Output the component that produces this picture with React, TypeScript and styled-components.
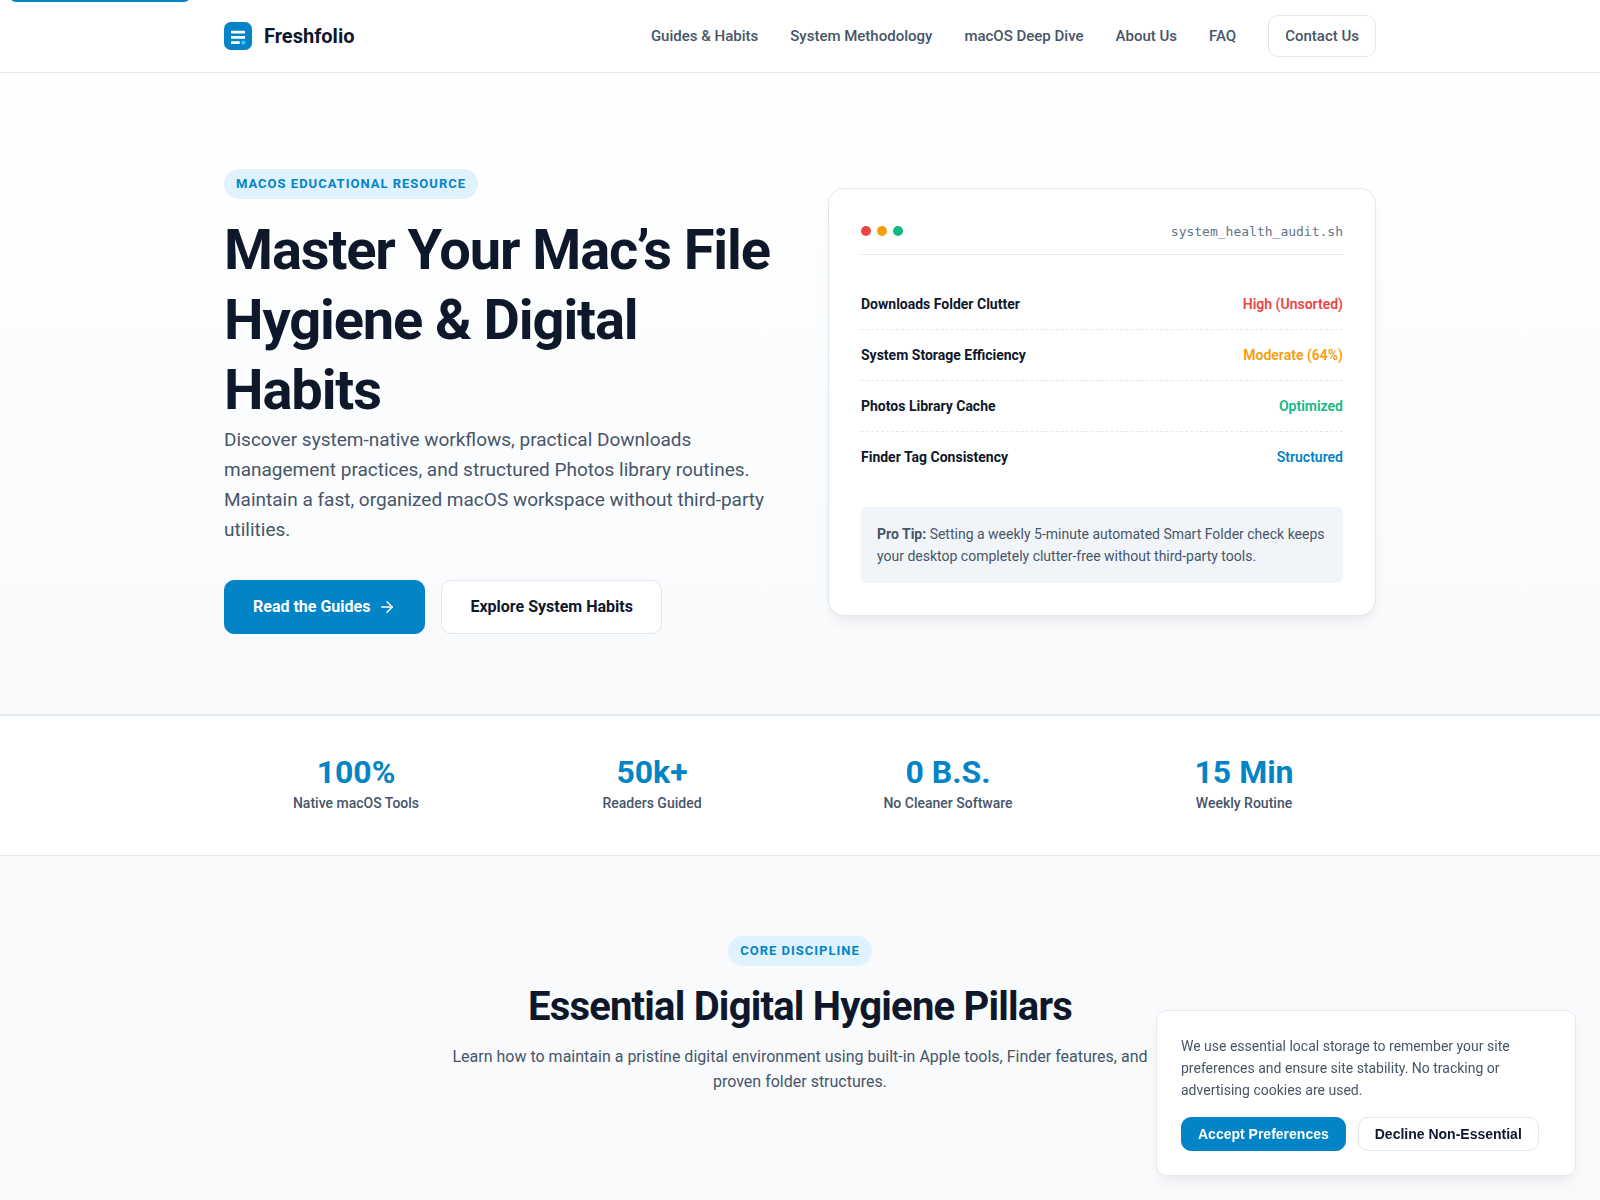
import React, { useState } from 'react';
import styled, { createGlobalStyle, css } from 'styled-components';
import { ArrowRight } from 'lucide-react';

const c = {
  blue: '#0284c7', sky: '#e0f2fe', ink: '#0f172a', slate: '#475569', muted: '#64748b',
  line: '#e2e8f0', soft: '#f1f5f9', page: '#f8fafc',
};

const GlobalStyle = createGlobalStyle`
  *, *::before, *::after { box-sizing: border-box; }
  body { margin: 0; background: ${c.page}; color: ${c.ink}; font: 400 16px/26px Roboto, sans-serif; }
  h1, h2, p, dl, dd, ul { margin: 0; padding: 0; }
  a { color: inherit; text-decoration: none; }
`;

const Page = styled.div`
  min-height: 100vh;
  overflow: hidden;
`;

const SkipLink = styled.a`
  position: absolute;
  top: -40px;
  left: 10px;
  z-index: 20;
  padding: 8px 16px;
  border-radius: 0 0 6px 6px;
  background: ${c.blue};
  color: #fff;
  font-weight: 600;
  &:focus { top: 0; }
`;

const Container = styled.div`
  width: 100%;
  max-width: 1200px;
  margin: 0 auto;
  padding: 0 24px;
`;

const Header = styled.header`
  background: #fff;
  border-bottom: 1px solid ${c.line};
`;

const HeaderRow = styled(Container)`
  display: flex;
  align-items: center;
  justify-content: space-between;
  min-height: 72px;
`;

const Brand = styled.a`
  display: flex;
  align-items: center;
  gap: 12px;
  font-size: 20px;
  font-weight: 700;
`;

const Nav = styled.nav`
  display: flex;
  align-items: center;
  gap: 32px;
  color: ${c.slate};
  font-size: 15px;
  line-height: 24px;
  font-weight: 500;
`;

const ContactLink = styled.a`
  padding: 8px 16px;
  border: 1px solid ${c.line};
  border-radius: 10px;
`;

const Hero = styled.section`
  padding: 96px 0 80px;
  border-bottom: 1px solid ${c.line};
  background: linear-gradient(180deg, #fff 0%, ${c.page} 100%);
`;

const HeroGrid = styled(Container)`
  display: grid;
  grid-template-columns: 1fr 1fr;
  gap: 56px;
  align-items: center;
`;

const Badge = styled.span`
  display: inline-block;
  padding: 4px 12px;
  border-radius: 20px;
  background: ${c.sky};
  color: ${c.blue};
  font-size: 13px;
  line-height: 22px;
  font-weight: 700;
  letter-spacing: 1px;
  text-transform: uppercase;
`;

const HeroTitle = styled.h1`
  margin-top: 16px;
  font-size: 56px;
  line-height: 70px;
  font-weight: 700;
  letter-spacing: -0.02em;
`;

const HeroText = styled.p`
  margin-bottom: 35px;
  color: ${c.slate};
  font-size: 19px;
  line-height: 30px;
`;

const Actions = styled.div`
  display: flex;
  flex-wrap: wrap;
  gap: 16px;
`;

const filled = css`
  border-color: ${c.blue};
  background: ${c.blue};
  color: #fff;
`;

const ActionLink = styled.a<{ $primary?: boolean }>`
  display: inline-flex;
  align-items: center;
  gap: 8px;
  padding: 13px 28px;
  border: 1px solid ${c.line};
  border-radius: 10px;
  background: #fff;
  font-weight: 700;
  ${(p) => p.$primary && filled}
`;

const AuditCard = styled.div`
  padding: 32px;
  border: 1px solid ${c.line};
  border-radius: 16px;
  background: #fff;
  box-shadow: 0 10px 15px -3px rgba(15, 23, 42, 0.05), 0 4px 6px -2px rgba(15, 23, 42, 0.03);
`;

const CardHead = styled.div`
  display: flex;
  align-items: center;
  justify-content: space-between;
  margin-bottom: 24px;
  padding-bottom: 12px;
  border-bottom: 1px solid ${c.line};
`;

const Dots = styled.div`
  display: flex;
  gap: 6px;
`;

const Dot = styled.span<{ $color: string }>`
  width: 10px;
  height: 10px;
  border-radius: 50%;
  background: ${(p) => p.$color};
`;

const FileName = styled.span`
  color: ${c.muted};
  font: 13px/21px "DejaVu Sans Mono", monospace;
`;

const AuditRow = styled.div`
  display: flex;
  align-items: center;
  justify-content: space-between;
  padding: 14px 0;
  border-bottom: 1px dashed ${c.line};
  font-size: 14px;
  line-height: 22px;
  &:last-child { border-bottom-color: transparent; }
`;

const AuditName = styled.dt`
  font-weight: 700;
`;

const AuditValue = styled.dd<{ $color: string }>`
  color: ${(p) => p.$color};
  font-weight: 600;
`;

const Tip = styled.p`
  margin-top: 24px;
  padding: 16px;
  border-radius: 6px;
  background: ${c.soft};
  color: ${c.slate};
  font-size: 14px;
  line-height: 22px;
`;

const Stats = styled.section`
  padding: 40px 0;
  border: solid ${c.line};
  border-width: 1px 0;
  background: #fff;
`;

const StatGrid = styled(Container)`
  display: grid;
  grid-template-columns: repeat(4, 1fr);
  gap: 32px;
  text-align: center;
`;

const StatNumber = styled.div`
  color: ${c.blue};
  font-size: 32px;
  line-height: 32px;
  font-weight: 700;
`;

const StatLabel = styled.div`
  margin-top: 4px;
  color: ${c.slate};
  font-size: 14px;
  line-height: 23px;
  font-weight: 500;
`;

const Pillars = styled.section`
  padding: 80px 0;
`;

const PillarsHead = styled.div`
  max-width: 700px;
  margin: 0 auto;
  text-align: center;
`;

const SectionTitle = styled.h2`
  margin: 16px 0 12px;
  font-size: 40px;
  line-height: 50px;
  font-weight: 700;
  letter-spacing: -0.02em;
`;

const SectionText = styled.p`
  color: ${c.slate};
  line-height: 25px;
`;

const Notice = styled.aside`
  position: fixed;
  right: 24px;
  bottom: 24px;
  z-index: 10;
  width: 420px;
  max-width: calc(100% - 48px);
  padding: 24px;
  border: 1px solid ${c.line};
  border-radius: 10px;
  background: #fff;
  box-shadow: 0 10px 15px -3px rgba(15, 23, 42, 0.05), 0 4px 6px -2px rgba(15, 23, 42, 0.03);
`;

const NoticeText = styled.p`
  margin-bottom: 16px;
  color: ${c.slate};
  font-size: 14px;
  line-height: 22px;
`;

const NoticeActions = styled.div`
  display: flex;
  flex-wrap: wrap;
  gap: 12px;
`;

const NoticeButton = styled.button<{ $primary?: boolean }>`
  padding: 8px 16px;
  border: 1px solid ${c.line};
  border-radius: 10px;
  background: #fff;
  color: ${c.ink};
  font: 600 14px/16px "Liberation Sans", Arial, sans-serif;
  cursor: pointer;
  ${(p) => p.$primary && filled}
`;

const Logo = () => (
  <svg width="28" height="28" viewBox="0 0 32 32" aria-hidden="true">
    <rect width="32" height="32" rx="8" fill={c.blue} />
    <path d="M8 10h16v3H8zM8 16h16v3H8zM8 22h10v3H8z" fill="#fff" />
    <circle cx="22" cy="23.5" r="2.5" fill="#38bdf8" />
  </svg>
);

const links = ['Guides & Habits', 'System Methodology', 'macOS Deep Dive', 'About Us', 'FAQ'];
const audit = [
  ['Downloads Folder Clutter', 'High (Unsorted)', '#ef4444'],
  ['System Storage Efficiency', 'Moderate (64%)', '#f59e0b'],
  ['Photos Library Cache', 'Optimized', '#10b981'],
  ['Finder Tag Consistency', 'Structured', c.blue],
];
const stats = [
  ['100%', 'Native macOS Tools'],
  ['50k+', 'Readers Guided'],
  ['0 B.S.', 'No Cleaner Software'],
  ['15 Min', 'Weekly Routine'],
];

export default function App() {
  const [noticeOpen, setNoticeOpen] = useState(true);
  const closeNotice = () => setNoticeOpen(false);
  return (
    <Page>
      <GlobalStyle />
      <SkipLink href="#main">Skip to main content</SkipLink>
      <Header>
        <HeaderRow>
          <Brand href="#"><Logo />Freshfolio</Brand>
          <Nav>
            {links.map((label) => <a key={label} href="#main">{label}</a>)}
            <ContactLink href="#contact">Contact Us</ContactLink>
          </Nav>
        </HeaderRow>
      </Header>
      <main id="main">
        <Hero>
          <HeroGrid>
            <div>
              <Badge>macOS Educational Resource</Badge>
              <HeroTitle>Master Your Mac’s File Hygiene &amp; Digital Habits</HeroTitle>
              <HeroText>
                Discover system-native workflows, practical Downloads management practices, and structured
                Photos library routines. Maintain a fast, organized macOS workspace without third-party utilities.
              </HeroText>
              <Actions>
                <ActionLink $primary href="#pillars">Read the Guides <ArrowRight size={18} aria-hidden="true" /></ActionLink>
                <ActionLink href="#pillars">Explore System Habits</ActionLink>
              </Actions>
            </div>
            <AuditCard>
              <CardHead>
                <Dots><Dot $color="#ef4444" /><Dot $color="#f59e0b" /><Dot $color="#10b981" /></Dots>
                <FileName>system_health_audit.sh</FileName>
              </CardHead>
              <dl>
                {audit.map(([name, value, color]) => (
                  <AuditRow key={name}>
                    <AuditName>{name}</AuditName>
                    <AuditValue $color={color}>{value}</AuditValue>
                  </AuditRow>
                ))}
              </dl>
              <Tip>
                <strong>Pro Tip:</strong> Setting a weekly 5-minute automated Smart Folder check keeps your desktop
                completely clutter-free without third-party tools.
              </Tip>
            </AuditCard>
          </HeroGrid>
        </Hero>
        <Stats>
          <StatGrid>
            {stats.map(([value, label]) => (
              <div key={label}>
                <StatNumber>{value}</StatNumber>
                <StatLabel>{label}</StatLabel>
              </div>
            ))}
          </StatGrid>
        </Stats>
        <Pillars id="pillars">
          <Container>
            <PillarsHead>
              <Badge>Core Discipline</Badge>
              <SectionTitle>Essential Digital Hygiene Pillars</SectionTitle>
              <SectionText>
                Learn how to maintain a pristine digital environment using built-in Apple tools, Finder features,
                and proven folder structures.
              </SectionText>
            </PillarsHead>
          </Container>
        </Pillars>
      </main>
      {noticeOpen && (
        <Notice aria-label="Storage preferences">
          <NoticeText>
            We use essential local storage to remember your site preferences and ensure site stability. No tracking or
            advertising cookies are used.
          </NoticeText>
          <NoticeActions>
            <NoticeButton $primary onClick={closeNotice}>Accept Preferences</NoticeButton>
            <NoticeButton onClick={closeNotice}>Decline Non-Essential</NoticeButton>
          </NoticeActions>
        </Notice>
      )}
    </Page>
  );
}
